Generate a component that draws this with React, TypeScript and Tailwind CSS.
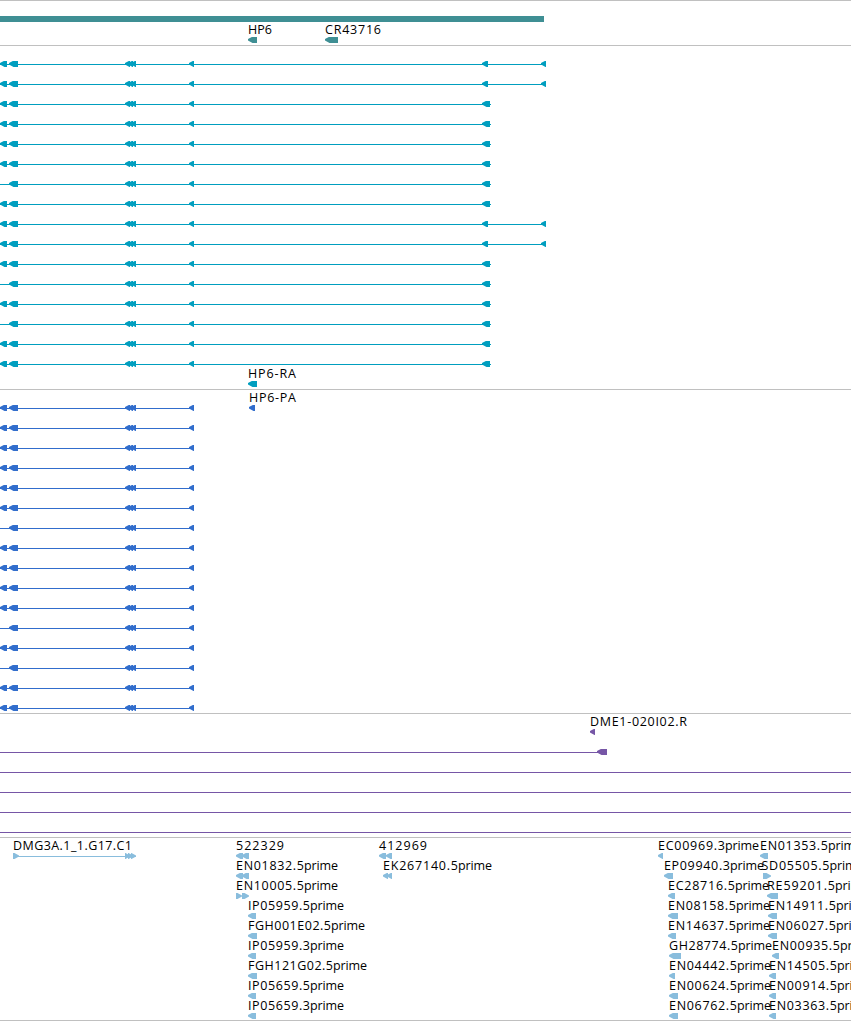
import type { ReactNode } from 'react';

type Feature = {
  row: number;
  // [start, end] of every block in the feature
  blocks: number[][];
  dir?: 'left' | 'right';
  label?: string;
  labelWidth?: number;
  line?: number[];
};

type TrackProps = {
  features: Feature[];
  height: number;
  color: string;
  rowHeight?: number;
  children?: ReactNode;
};

const EXONS = [
  [9, 18],
  [125, 130],
  [128, 133],
  [131, 136],
  [189, 194],
];

// rows where the leftmost exon is not part of the model
const SHORT_ROWS = [6, 11, 13];
const LONG_ROWS = [0, 1, 8, 9];

const rows = Array.from({ length: 16 }, (_, i) => i);

const genes: Feature[] = [
  { row: 1, blocks: [[248, 257]], label: 'HP6', labelWidth: 24 },
  { row: 1, blocks: [[325, 338]], label: 'CR43716', labelWidth: 56 },
];

const transcripts: Feature[] = [
  ...rows.map((row) => ({
    row,
    line: [0, LONG_ROWS.includes(row) ? 546 : 491],
    blocks: [
      ...(SHORT_ROWS.includes(row) ? [] : [[0, 7]]),
      ...EXONS,
      ...(LONG_ROWS.includes(row) ? [[482, 488], [541, 546]] : [[482, 490]]),
    ],
  })),
  { row: 16, blocks: [[248, 257]], label: 'HP6-RA', labelWidth: 48 },
];

const proteins: Feature[] = [
  ...rows.map((row) => ({
    row,
    line: [0, 194],
    blocks: [...(SHORT_ROWS.includes(row) ? [] : [[0, 7]]), ...EXONS],
  })),
  { row: 0, blocks: [[249, 255]], label: 'HP6-PA', labelWidth: 47 },
];

const bacs: Feature[] = [
  { row: 0, blocks: [[590, 595]], label: 'DME1-020I02.R', labelWidth: 97 },
  { row: 1, line: [0, 606], blocks: [[597, 607]] },
  { row: 2, line: [0, 851], blocks: [] },
  { row: 3, line: [0, 851], blocks: [] },
  { row: 4, line: [0, 851], blocks: [] },
  { row: 5, line: [0, 851], blocks: [] },
];

const ests: Feature[] = [
  {
    row: 0,
    dir: 'right',
    line: [13, 136],
    blocks: [[13, 19], [125, 130], [128, 133], [131, 136]],
    label: 'DMG3A.1_1.G17.C1',
    labelWidth: 119,
  },
  { row: 0, blocks: [[236, 243], [242, 249]], label: '522329', labelWidth: 48 },
  { row: 1, blocks: [[236, 243], [242, 249]], label: 'EN01832.5prime', labelWidth: 102 },
  { row: 2, dir: 'right', blocks: [[236, 242], [242, 249]], label: 'EN10005.5prime', labelWidth: 102 },
  { row: 3, blocks: [[248, 256]], label: 'IP05959.5prime', labelWidth: 96 },
  { row: 4, blocks: [[248, 257]], label: 'FGH001E02.5prime', labelWidth: 117 },
  { row: 5, blocks: [[248, 256]], label: 'IP05959.3prime', labelWidth: 96 },
  { row: 6, blocks: [[248, 257]], label: 'FGH121G02.5prime', labelWidth: 119 },
  { row: 7, blocks: [[248, 256]], label: 'IP05659.5prime', labelWidth: 96 },
  { row: 8, blocks: [[248, 256]], label: 'IP05659.3prime', labelWidth: 96 },
  { row: 0, blocks: [[379, 386], [386, 392]], label: '412969', labelWidth: 48 },
  { row: 1, blocks: [[383, 388], [387, 392]], label: 'EK267140.5prime', labelWidth: 109 },
  { row: 0, blocks: [[658, 663]], label: 'EC00969.3prime', labelWidth: 101 },
  { row: 1, blocks: [[664, 673]], label: 'EP09940.3prime', labelWidth: 100 },
  { row: 2, blocks: [[668, 675]], label: 'EC28716.5prime', labelWidth: 101 },
  { row: 3, blocks: [[668, 678]], label: 'EN08158.5prime', labelWidth: 102 },
  { row: 4, blocks: [[668, 676]], label: 'EN14637.5prime', labelWidth: 102 },
  { row: 5, blocks: [[669, 681]], label: 'GH28774.5prime', labelWidth: 103 },
  { row: 6, blocks: [[669, 675]], label: 'EN04442.5prime', labelWidth: 102 },
  { row: 7, blocks: [[669, 678]], label: 'EN00624.5prime', labelWidth: 102 },
  { row: 8, blocks: [[669, 678]], label: 'EN06762.5prime', labelWidth: 102 },
  { row: 0, blocks: [[760, 768]], label: 'EN01353.5prime', labelWidth: 102 },
  { row: 1, dir: 'right', blocks: [[763, 771]], label: 'SD05505.5prime', labelWidth: 102 },
  { row: 2, blocks: [[767, 778]], label: 'RE59201.5prime', labelWidth: 102 },
  { row: 3, blocks: [[768, 777]], label: 'EN14911.5prime', labelWidth: 102 },
  { row: 4, blocks: [[768, 777]], label: 'EN06027.5prime', labelWidth: 102 },
  { row: 5, blocks: [[772, 779]], label: 'EN00935.5prime', labelWidth: 102 },
  { row: 6, blocks: [[769, 776]], label: 'EN14505.5prime', labelWidth: 102 },
  { row: 7, blocks: [[769, 776]], label: 'EN00914.5prime', labelWidth: 102 },
  { row: 8, blocks: [[769, 776]], label: 'EN03363.5prime', labelWidth: 102 },
];

// block with a slightly blunt head on the side it points to
function arrow(start: number, end: number, y: number, dir: 'left' | 'right') {
  const head = 4.5;
  if (dir === 'right') {
    return `M${end} ${y - 0.6}L${end - head} ${y - 3}H${start}V${y + 3}H${end - head}L${end} ${y + 0.6}Z`;
  }
  return `M${start} ${y - 0.9}L${start + head - 0.7} ${y - 3}H${end}V${y + 3}H${start + head}L${start} ${y + 0.5}Z`;
}

const SUFFIX = 'prime';
const SUFFIX_WIDTH = 34;

function Label({ text, width, x, y }: { text: string; width: number; x: number; y: number }) {
  const hasSuffix = text.endsWith(SUFFIX);
  const name = hasSuffix ? text.slice(0, -SUFFIX.length) : text;
  const nameWidth = hasSuffix ? width - SUFFIX_WIDTH : width;

  return (
    <text x={x} y={y} className="fill-black font-['Open_Sans',sans-serif] text-[12.5px]">
      <tspan textLength={nameWidth}>{name}</tspan>
      {hasSuffix && (
        <tspan x={x + nameWidth} textLength={SUFFIX_WIDTH}>
          {SUFFIX}
        </tspan>
      )}
    </text>
  );
}

function Glyph({ feature, y }: { feature: Feature; y: number }) {
  const { blocks, line, label, labelWidth = 0, dir = 'left' } = feature;

  return (
    <g>
      {line && <rect x={line[0]} y={y} width={line[1] - line[0]} height={1} />}
      {blocks.map(([start, end]) => (
        <path key={start} d={arrow(start, end, y, dir)} />
      ))}
      {label && (
        <Label
          text={label}
          width={labelWidth}
          x={blocks[0][0] - (label.startsWith('SD') ? 1.5 : 0)}
          y={y - 6}
        />
      )}
    </g>
  );
}

function Track({ features, height, color, rowHeight = 20, children }: TrackProps) {
  return (
    <section className="border-t border-[#c0c0c0]">
      <svg
        width={851}
        height={height - 1}
        viewBox={`0 1 851 ${height - 1}`}
        className={`block ${color}`}
      >
        {children}
        {features.map((feature, i) => (
          <Glyph key={i} feature={feature} y={19 + feature.row * rowHeight} />
        ))}
      </svg>
    </section>
  );
}

export default function App() {
  return (
    <main className="w-[851px] overflow-hidden border-b border-[#c0c0c0] bg-white">
      <Track features={genes} height={45} rowHeight={21} color="fill-[#3f8f94]">
        <rect x={0} y={16} width={544} height={6} />
      </Track>
      <Track features={transcripts} height={344} color="fill-[#009ebf]" />
      <Track features={proteins} height={324} color="fill-[#316dcc]" />
      <Track features={bacs} height={124} color="fill-[#7656a6]" />
      <Track features={ests} height={183} color="fill-[#89bddd]" />
    </main>
  );
}
